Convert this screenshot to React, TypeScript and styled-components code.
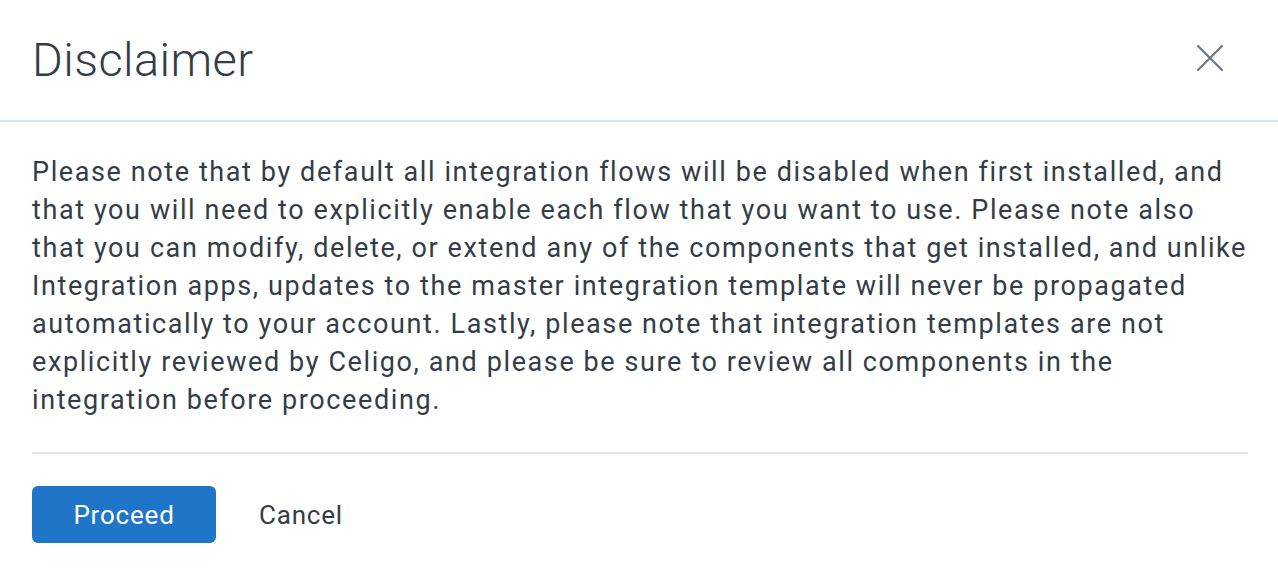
import React from "react";
import styled, { createGlobalStyle } from "styled-components";

const Global = createGlobalStyle`
  html, body { margin: 0; padding: 0; background: #ffffff; }
  body { font-family: Roboto, "Noto Sans", sans-serif; -webkit-font-smoothing: antialiased; }
  * { box-sizing: border-box; }
`;

const Dialog = styled.div`
  width: 1278px;
  height: 574px;
  background: #ffffff;
  display: flex;
  flex-direction: column;
`;

const Header = styled.div`
  height: 122px;
  display: flex;
  align-items: center;
  justify-content: space-between;
  padding: 0 50px 0 32px;
  border-bottom: 2px solid #dbe4eb;
`;

const Title = styled.h1`
  margin: 0;
  font-family: Roboto, sans-serif;
  font-weight: 300;
  font-size: 47px;
  color: #333d47;
  letter-spacing: 0.4px;
  line-height: 1;
  padding-bottom: 2px;
`;

const CloseButton = styled.button`
  border: none;
  background: transparent;
  padding: 0;
  width: 36px;
  height: 36px;
  display: flex;
  align-items: center;
  justify-content: center;
  cursor: pointer;
  margin-top: -4px;
`;

const Body = styled.div`
  padding: 31px 30px 0 32px;
`;

const Text = styled.p`
  margin: 0;
  width: 1216px;
  font-size: 27px;
  line-height: 38px;
  color: #333d47;
  letter-spacing: 1.6px;
  padding-bottom: 33px;
  border-bottom: 2px solid #dbe4eb;
`;

const Footer = styled.div`
  display: flex;
  align-items: center;
  gap: 43px;
  padding: 32px 32px 0 32px;
`;

const Button = styled.button<{ $primary?: boolean }>`
  font-family: Roboto, sans-serif;
  font-size: 26px;
  letter-spacing: 0.8px;
  height: 57px;
  border-radius: 6px;
  border: none;
  cursor: pointer;
  padding: ${(p) => (p.$primary ? "0 20px" : "0")};
  width: ${(p) => (p.$primary ? "184px" : "auto")};
  background: ${(p) => (p.$primary ? "#1f76c8" : "transparent")};
  color: ${(p) => (p.$primary ? "#ffffff" : "#333d47")};
`;

export default function App() {
  return (
    <>
      <Global />
      <Dialog>
        <Header>
          <Title>Disclaimer</Title>
          <CloseButton aria-label="Close">
            <svg width="26" height="26" viewBox="0 0 26 26" fill="none">
              <path d="M1 1 L25 25 M25 1 L1 25" stroke="#6b7680" strokeWidth="2.2" strokeLinecap="round" />
            </svg>
          </CloseButton>
        </Header>
        <Body>
          <Text>
            Please note that by default all integration flows will be disabled when first installed, and that you will need to explicitly enable each flow that you want to use. Please note also that you can modify, delete, or extend any of the components that get installed, and unlike Integration apps, updates to the master integration template will never be propagated automatically to your account. Lastly, please note that integration templates are not explicitly reviewed by Celigo, and please be sure to review all components in the integration before proceeding.
          </Text>
        </Body>
        <Footer>
          <Button $primary>Proceed</Button>
          <Button>Cancel</Button>
        </Footer>
      </Dialog>
    </>
  );
}
